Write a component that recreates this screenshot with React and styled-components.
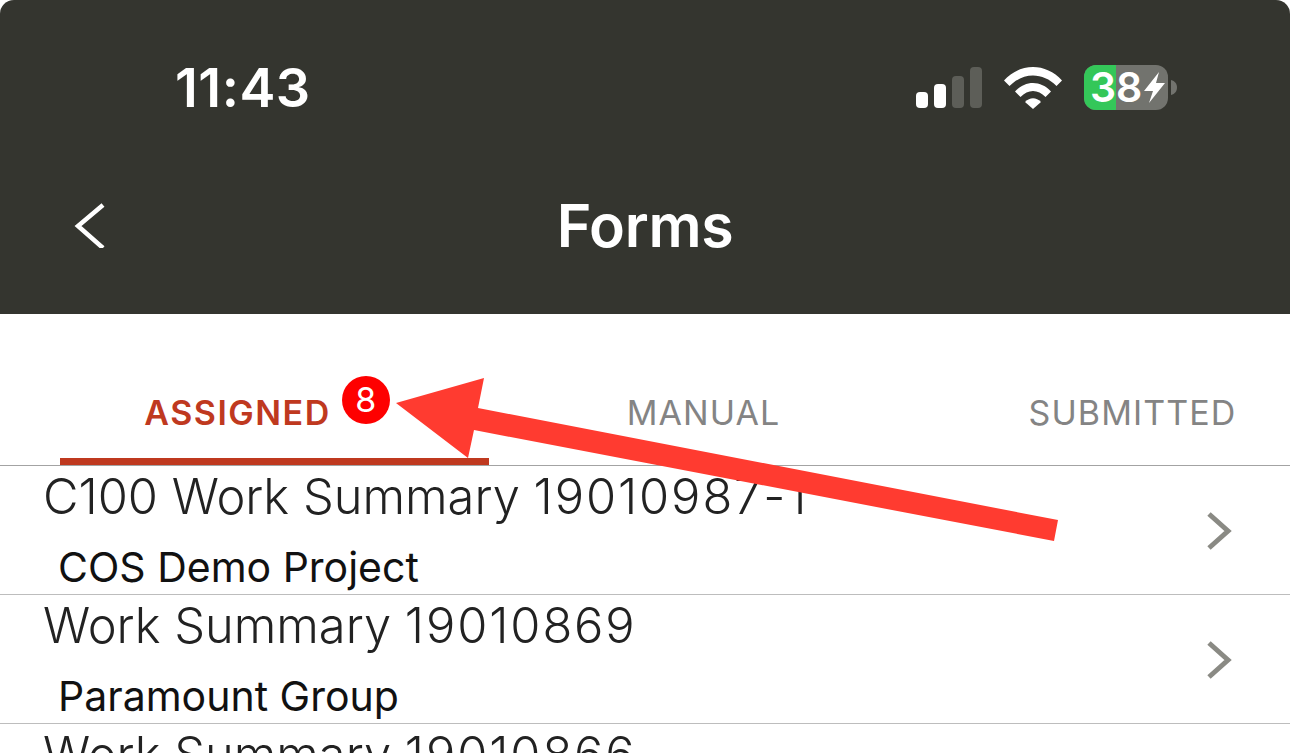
import React from 'react';
import styled, { createGlobalStyle } from 'styled-components';

const GlobalStyle = createGlobalStyle`
  html, body {
    margin: 0;
    padding: 0;
    background: #fff;
    overflow: hidden;
  }
  body {
    font-family: Inter, "Liberation Sans", sans-serif;
  }
`;

const Screen = styled.div`
  position: relative;
  width: 1290px;
  height: 753px;
  overflow: hidden;
  background: #fff;
`;

const Header = styled.header`
  height: 314px;
  box-sizing: border-box;
  padding-top: 59px;
  background: #34352f;
  border-radius: 14px 14px 0 0;
  color: #fff;
`;

const StatusBar = styled.div`
  height: 58px;
  display: flex;
  align-items: center;
  justify-content: space-between;
  padding: 0 112px 0 175px;
`;

const Time = styled.div`
  font-size: 54px;
  font-weight: 600;
  line-height: 58px;
  letter-spacing: 0.5px;
`;

const StatusIcons = styled.div`
  display: flex;
  align-items: center;
  gap: 22px;
`;

const NavBar = styled.div`
  height: 116px;
  margin-top: 81px;
  display: grid;
  grid-template-columns: 1fr auto 1fr;
  align-items: start;
  padding-left: 72px;
`;

const BackButton = styled.div`
  display: flex;
`;

const Title = styled.h1`
  margin: -6px 0 0 -72px;
  font-size: 59px;
  line-height: 68px;
  font-weight: 600;
  letter-spacing: -0.3px;
`;

const Tabs = styled.nav`
  height: 152px;
  box-sizing: border-box;
  display: flex;
  padding-left: 60px;
  border-bottom: 1px solid #a3a3a3;
`;

const Tab = styled.div`
  flex: 0 0 429px;
  height: 151px;
  box-sizing: border-box;
  display: flex;
  align-items: flex-start;
  justify-content: center;
  padding-top: 79px;
  font-size: 34px;
  line-height: 40px;
  font-weight: ${(p) => (p.$active ? 600 : 400)};
  letter-spacing: ${(p) => (p.$active ? '1.5px' : '1.1px')};
  color: ${(p) => (p.$active ? '#bf391f' : '#848484')};
  border-bottom: ${(p) => (p.$active ? '7px solid #bf391f' : '7px solid transparent')};
`;

const Badge = styled.span`
  width: 48px;
  height: 48px;
  margin: -17px 15px 0 11px;
  flex: none;
  border-radius: 50%;
  display: flex;
  align-items: center;
  justify-content: center;
  background: #fe0000;
  color: #fff;
  font-size: 34px;
  font-weight: 400;
  letter-spacing: 0;
`;

const Row = styled.div`
  height: 129px;
  box-sizing: border-box;
  display: flex;
  align-items: flex-start;
  justify-content: space-between;
  padding: 2px 58px 0 43px;
  border-bottom: 1px solid #bdbdbd;
`;

const RowText = styled.div`
  min-width: 0;
`;

const RowTitle = styled.div`
  font-size: 48.800px;
  line-height: 58px;
  font-weight: 340;
  color: #222;
  white-space: nowrap;
`;

const RowNumber = styled.span`
  letter-spacing: 1.9px;
`;

const RowSub = styled.div`
  margin-top: 18px;
  padding-left: 15px;
  font-size: 41px;
  line-height: 46px;
  color: #111;
  white-space: nowrap;
`;

const Chevron = styled.svg`
  flex: none;
  margin-top: 44px;
`;

const Arrow = styled.svg`
  position: absolute;
  left: 0;
  top: 0;
  pointer-events: none;
`;

const BatteryIcon = styled.svg`
  overflow: visible;
`;

const rows = [
  { id: 1, title: 'C100 Work Summary', number: '19010987-1', sub: 'COS Demo Project' },
  { id: 2, title: 'Work Summary', number: '19010869', sub: 'Paramount Group' },
  { id: 3, title: 'Work Summary', number: '19010866', sub: '' },
];

function Signal() {
  return (
    <svg width="66" height="42" viewBox="0 0 66 42">
      <rect x="0" y="25" width="12" height="16" rx="4" fill="#fff" />
      <rect x="18" y="17" width="12" height="24" rx="4" fill="#fff" />
      <rect x="36" y="9" width="12" height="32" rx="4" fill="#5d5e58" />
      <rect x="54" y="0" width="12" height="41" rx="4" fill="#5d5e58" />
    </svg>
  );
}

function Wifi() {
  return (
    <svg width="58" height="42" viewBox="0 0 58 42" fill="#fff">
      <path d="M0 13.5 C16 -4.5 42 -4.5 58 13.5 L52.5 19 C39 5 19 5 5.500 19 Z" />
      <path d="M11 24.5 C21 13 37 13 47 24.5 L41.500 30 C34 22 24 22 16.500 30 Z" />
      <path d="M21 35 C26 30 32 30 37 35 L29 42 Z" />
    </svg>
  );
}

function Battery() {
  return (
    <BatteryIcon width="94" height="46" viewBox="0 0 94 46">
      <rect x="0" y="0" width="84" height="45" rx="12" fill="#72736e" />
      <path d="M12 0 H32 V45 H12 A12 12 0 0 1 0 33 V12 A12 12 0 0 1 12 0 Z" fill="#34c759" />
      <path d="M87 15 C91 16 93 19 93 22.500 C93 26 91 29 87 30 Z" fill="#72736e" />
      <text x="6" y="37" fontFamily="Inter, sans-serif" fontSize="41" fontWeight="600" fill="#fff">3</text>
      <text x="32" y="37" fontFamily="Inter, sans-serif" fontSize="41" fontWeight="600" fill="#fff">8</text>
      <path d="M75 7 L60 26 H69 L65 38 L81 18 H72 Z" fill="#fff" />
    </BatteryIcon>
  );
}

function App() {
  return (
    <Screen>
      <GlobalStyle />
      <Header>
        <StatusBar>
          <Time>11:43</Time>
          <StatusIcons>
            <Signal />
            <Wifi />
            <Battery />
          </StatusIcons>
        </StatusBar>
        <NavBar>
          <BackButton>
            <svg width="36" height="50" viewBox="0 0 36 50" fill="none">
              <path d="M31 7 L6 28 L31 50" stroke="#fff" strokeWidth="4.500" />
            </svg>
          </BackButton>
          <Title>Forms</Title>
        </NavBar>
      </Header>
      <Tabs>
        <Tab $active>
          ASSIGNED
          <Badge>8</Badge>
        </Tab>
        <Tab>MANUAL</Tab>
        <Tab>SUBMITTED</Tab>
      </Tabs>
      {rows.map((row) => (
        <Row key={row.id}>
          <RowText>
            <RowTitle>
              {row.title} <RowNumber>{row.number}</RowNumber>
            </RowTitle>
            {row.sub && <RowSub>{row.sub}</RowSub>}
          </RowText>
          <Chevron width="26" height="38" viewBox="0 0 26 38" fill="none">
            <path d="M3 2 L22 19 L3 36" stroke="#8a8a84" strokeWidth="5" />
          </Chevron>
        </Row>
      ))}
      <Arrow width="1290" height="753" viewBox="0 0 1290 753">
        <polygon
          points="396,403 484,378 478,408 1058,520 1054,541 474,430 468,458"
          fill="#ff3b30"
        />
      </Arrow>
    </Screen>
  );
}

export default App;
